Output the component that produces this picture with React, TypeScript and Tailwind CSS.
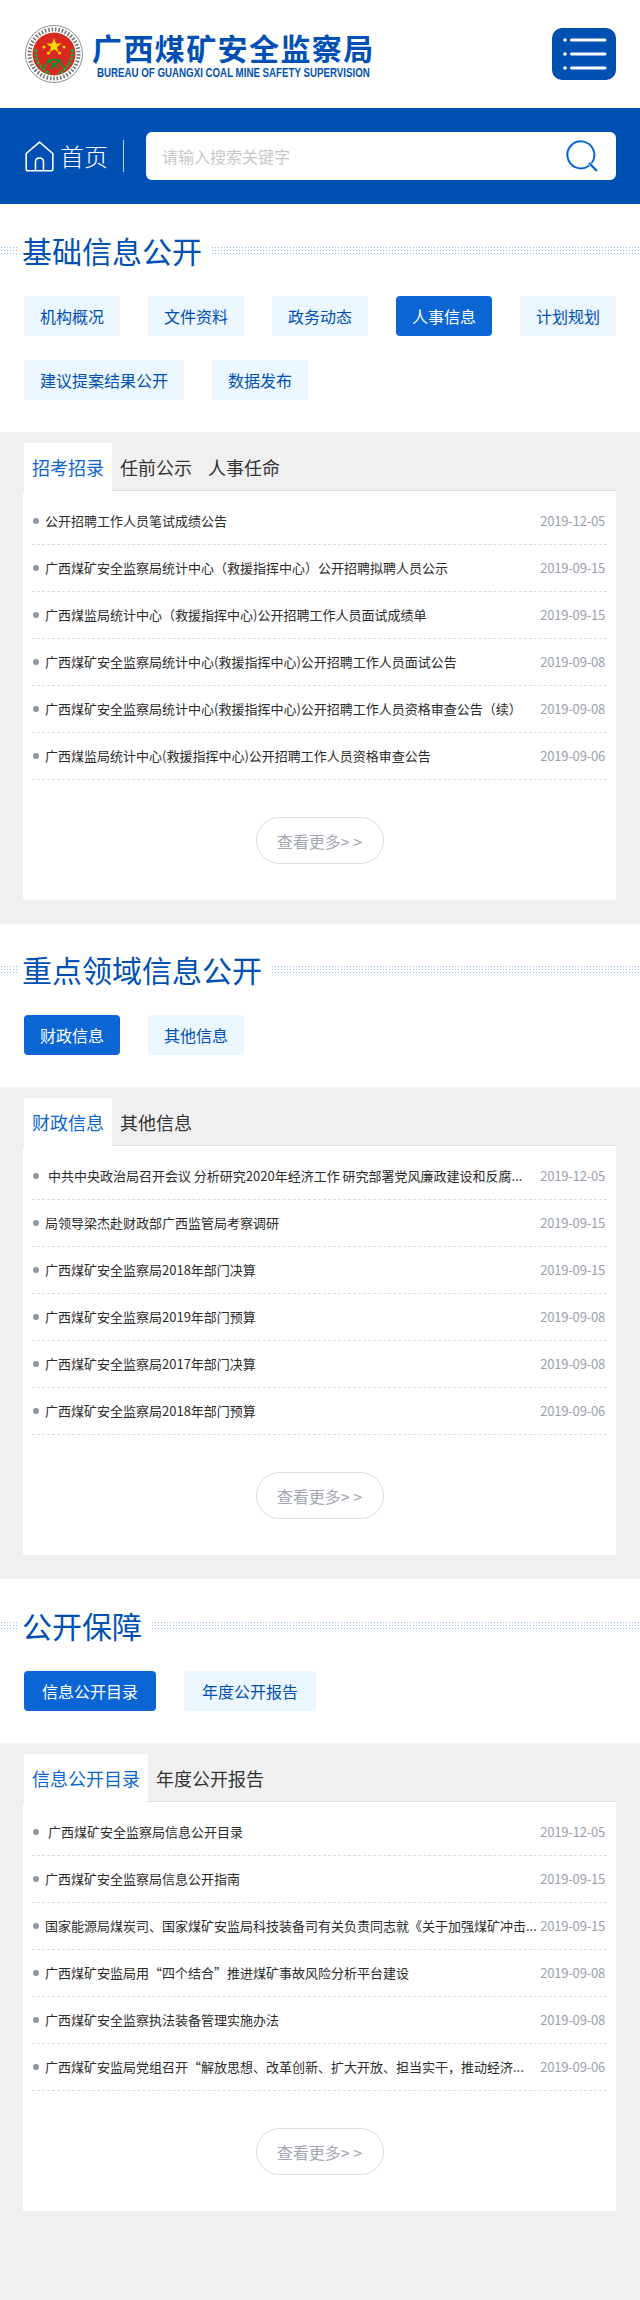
import React from 'react';

type Row = { title: string; date: string };

type Block = {
  heading: string;
  topPad: string;
  buttons: { label: string; width: string; active?: boolean }[];
  multiRow?: boolean;
  tabs: string[];
  rows: Row[];
};

const dates = ['2019-12-05', '2019-09-15', '2019-09-15', '2019-09-08', '2019-09-08', '2019-09-06'];

const withDates = (titles: string[]): Row[] => titles.map((title, i) => ({ title, date: dates[i] }));

const blocks: Block[] = [
  {
    heading: '基础信息公开',
    topPad: 'pt-[31px]',
    buttons: [
      { label: '机构概况', width: 'w-[96px]' },
      { label: '文件资料', width: 'w-[96px]' },
      { label: '政务动态', width: 'w-[96px]' },
      { label: '人事信息', width: 'w-[96px]', active: true },
      { label: '计划规划', width: 'w-[96px]' },
      { label: '建议提案结果公开', width: 'w-[160px]' },
      { label: '数据发布', width: 'w-[96px]' },
    ],
    multiRow: true,
    tabs: ['招考招录', '任前公示', '人事任命'],
    rows: withDates([
      '公开招聘工作人员笔试成绩公告',
      '广西煤矿安全监察局统计中心（救援指挥中心）公开招聘拟聘人员公示',
      '广西煤监局统计中心（救援指挥中心)公开招聘工作人员面试成绩单',
      '广西煤矿安全监察局统计中心(救援指挥中心)公开招聘工作人员面试公告',
      '广西煤矿安全监察局统计中心(救援指挥中心)公开招聘工作人员资格审查公告（续）',
      '广西煤监局统计中心(救援指挥中心)公开招聘工作人员资格审查公告',
    ]),
  },
  {
    heading: '重点领域信息公开',
    topPad: 'pt-[30px]',
    buttons: [
      { label: '财政信息', width: 'w-[96px]', active: true },
      { label: '其他信息', width: 'w-[96px]' },
    ],
    tabs: ['财政信息', '其他信息'],
    rows: withDates([
      '\u00a0中共中央政治局召开会议 分析研究2020年经济工作 研究部署党风廉政建设和反腐...',
      '局领导梁杰赴财政部广西监管局考察调研',
      '广西煤矿安全监察局2018年部门决算',
      '广西煤矿安全监察局2019年部门预算',
      '广西煤矿安全监察局2017年部门决算',
      '广西煤矿安全监察局2018年部门预算',
    ]),
  },
  {
    heading: '公开保障',
    topPad: 'pt-[31px]',
    buttons: [
      { label: '信息公开目录', width: 'w-[132px]', active: true },
      { label: '年度公开报告', width: 'w-[132px]' },
    ],
    tabs: ['信息公开目录', '年度公开报告'],
    rows: withDates([
      '\u00a0广西煤矿安全监察局信息公开目录',
      '广西煤矿安全监察局信息公开指南',
      '国家能源局煤炭司、国家煤矿安监局科技装备司有关负责同志就《关于加强煤矿冲击...',
      '广西煤矿安监局用“四个结合”推进煤矿事故风险分析平台建设',
      '广西煤矿安全监察执法装备管理实施办法',
      '广西煤矿安监局党组召开“解放思想、改革创新、扩大开放、担当实干，推动经济...',
    ]),
  },
];

const Emblem = () => (
  <svg width="58" height="58" viewBox="0 0 58 58" className="shrink-0">
    <circle cx="29" cy="29" r="28.5" fill="#fff" stroke="#8d8d8d" strokeWidth="1" />
    <circle cx="29" cy="29" r="24.5" fill="none" stroke="#777" strokeWidth="4" strokeDasharray="1.6 1.8" />
    <circle cx="29" cy="29" r="21.5" fill="#d9281e" />
    <polygon
      points="29,13 30.9,18.6 36.6,18.6 32,22 33.7,27.5 29,24.2 24.3,27.5 26,22 21.4,18.6 27.1,18.6"
      fill="#ffd800"
    />
    <circle cx="19" cy="22" r="1.5" fill="#ffd800" />
    <circle cx="39" cy="22" r="1.5" fill="#ffd800" />
    <circle cx="23.5" cy="28" r="1.5" fill="#ffd800" />
    <circle cx="34.5" cy="28" r="1.5" fill="#ffd800" />
    <path d="M10.5 24 C10 35 15 44 25 49" fill="none" stroke="#2f9a3c" strokeWidth="3" strokeDasharray="3 1.2" />
    <path d="M47.5 24 C48 35 43 44 33 49" fill="none" stroke="#2f9a3c" strokeWidth="3" strokeDasharray="3 1.2" />
    <path
      d="M19 43 L24 35 L29 41 L34 35 L39 43 M22 37 L29 34 L36 37 M25 44 L29 39 L33 44"
      fill="none"
      stroke="#1f8a35"
      strokeWidth="2"
    />
  </svg>
);

const MenuIcon = () => (
  <svg width="64" height="52" viewBox="0 0 64 52">
    <rect width="64" height="52" rx="10" fill="#0050b3" />
    <circle cx="13" cy="12" r="1.8" fill="#fff" />
    <circle cx="13" cy="26" r="1.8" fill="#fff" />
    <circle cx="13" cy="40" r="1.8" fill="#fff" />
    <g stroke="#fff" strokeWidth="3" strokeLinecap="round">
      <line x1="19.5" y1="12" x2="53" y2="12" />
      <line x1="19.5" y1="26" x2="53" y2="26" />
      <line x1="19.5" y1="40" x2="53" y2="40" />
    </g>
  </svg>
);

const HomeIcon = () => (
  <svg width="29" height="31" viewBox="0 0 29 31" fill="none" stroke="#fff" strokeWidth="1.6" strokeLinejoin="round">
    <path d="M14.5 1.2 L27.8 12.5 L27.8 28 Q27.8 29.8 26 29.8 L3 29.8 Q1.2 29.8 1.2 28 L1.2 12.5 Z" />
    <path d="M10.5 29.8 L10.5 21 Q10.5 17 14.5 17 Q18.5 17 18.5 21 L18.5 29.8" />
  </svg>
);

const SearchIcon = () => (
  <svg width="34" height="32" viewBox="0 0 34 32" fill="none" stroke="#0b65d4" strokeWidth="2">
    <path d="M22.5 26 A13.5 13.5 0 1 1 26 22.5" strokeLinecap="round" />
    <line x1="23" y1="23" x2="31" y2="31" strokeWidth="2.4" />
  </svg>
);

const SectionTitle = ({ text }: { text: string }) => (
  <div className="flex items-center h-[30px]">
    <div className="w-[18px] h-[8px] bg-[radial-gradient(circle,#93bfe6_0.8px,transparent_1px)] bg-[length:3px_3px]" />
    <h2 className="ml-[4px] mr-[9px] text-[30px] leading-[30px] font-normal text-[#0050b3] whitespace-nowrap">{text}</h2>
    <div className="flex-1 h-[8px] bg-[radial-gradient(circle,#93bfe6_0.8px,transparent_1px)] bg-[length:3px_3px]" />
  </div>
);

const NewsPanel = ({ tabs, rows }: { tabs: string[]; rows: Row[] }) => (
  <div className="ml-[23px] mr-[24px]">
    <div className="flex h-[48px] pl-px border-b border-[#dcdcdc]">
      {tabs.map((tab, i) => (
        <div
          key={tab}
          className={
            i === 0
              ? 'h-[48px] px-2 bg-white text-[#0b65d4] text-[18px] leading-[48px]'
              : 'h-[47px] px-2 text-[#333] text-[18px] leading-[48px]'
          }
        >
          {tab}
        </div>
      ))}
    </div>
    <div className="bg-white px-[9px] pt-[7px] pb-[36px]">
      {rows.map((row) => (
        <div key={row.date + row.title} className="flex items-center h-[47px] border-b border-dashed border-[#ddd] pl-px pr-[2px]">
          <span className="w-[6px] h-[6px] rounded-full bg-[#8f96a6] shrink-0" />
          <span className="ml-[6px] flex-1 min-w-0 whitespace-nowrap text-[13px] text-[#2b2b2b]">{row.title}</span>
          <span className="shrink-0 text-[13px] tracking-[-0.2px] text-[#9a9fad]">{row.date}</span>
        </div>
      ))}
      <div className="mt-[37px] mx-auto w-[128px] h-[47px] rounded-full border border-[#dcdcdc] flex items-center justify-center text-[16px] text-[#a2a6b2]">
        查看更多&gt; &gt;
      </div>
    </div>
  </div>
);

const App: React.FC = () => {
  return (
    <div className="min-h-[2300px] bg-[#f0f0f0] font-['Noto_Sans_CJK_SC','Noto_Sans',sans-serif]">
      <header className="h-[108px] bg-white flex items-center justify-between pl-[25px] pr-[24px]">
        <div className="flex items-center">
          <Emblem />
          <div className="ml-[9px] w-[284px]">
            <div className="text-[30px] leading-[34px] font-bold text-[#0050b3] tracking-[1.4px] whitespace-nowrap">
              广西煤矿安全监察局
            </div>
            <div className="mt-[3px] ml-[5px] origin-left scale-x-[0.81] font-['Liberation_Sans',sans-serif] text-[12px] leading-[12px] font-bold text-[#0050b3] whitespace-nowrap">
              BUREAU OF GUANGXI COAL MINE SAFETY SUPERVISION
            </div>
          </div>
        </div>
        <MenuIcon />
      </header>

      <div className="h-[96px] bg-[#0050b3] flex items-center pl-[25px] pr-[24px]">
        <HomeIcon />
        <span className="ml-[6px] text-[24px] text-white font-light">首页</span>
        <div className="ml-[15px] w-px h-[32px] bg-[#b9cfeb]" />
        <div className="ml-[22px] flex-1 h-[48px] bg-white rounded-[6px] flex items-center justify-between pl-4 pr-[16px]">
          <span className="text-[16px] text-[#c8c8c8]">请输入搜索关键字</span>
          <SearchIcon />
        </div>
      </div>

      {blocks.map((block) => (
        <section key={block.heading}>
          <div className={`bg-white ${block.topPad} pb-[32px]`}>
            <SectionTitle text={block.heading} />
            <div
              className={
                block.multiRow
                  ? 'mt-[31px] pl-[24px] pr-[24px] flex flex-wrap gap-x-[28px] gap-y-[24px]'
                  : 'mt-[31px] pl-[24px] pr-[24px] flex flex-wrap gap-x-[28px]'
              }
            >
              {block.buttons.map((btn) => (
                <div
                  key={btn.label}
                  className={
                    btn.active
                      ? `${btn.width} h-[40px] rounded-[4px] bg-[#0b65d4] text-white text-[16px] flex items-center justify-center`
                      : `${btn.width} h-[40px] rounded-[4px] bg-[#ebf6ff] text-[#0050b3] text-[16px] flex items-center justify-center`
                  }
                >
                  {btn.label}
                </div>
              ))}
            </div>
          </div>
          <div className="pt-[11px] pb-[24px]">
            <NewsPanel tabs={block.tabs} rows={block.rows} />
          </div>
        </section>
      ))}
    </div>
  );
};

export default App;
